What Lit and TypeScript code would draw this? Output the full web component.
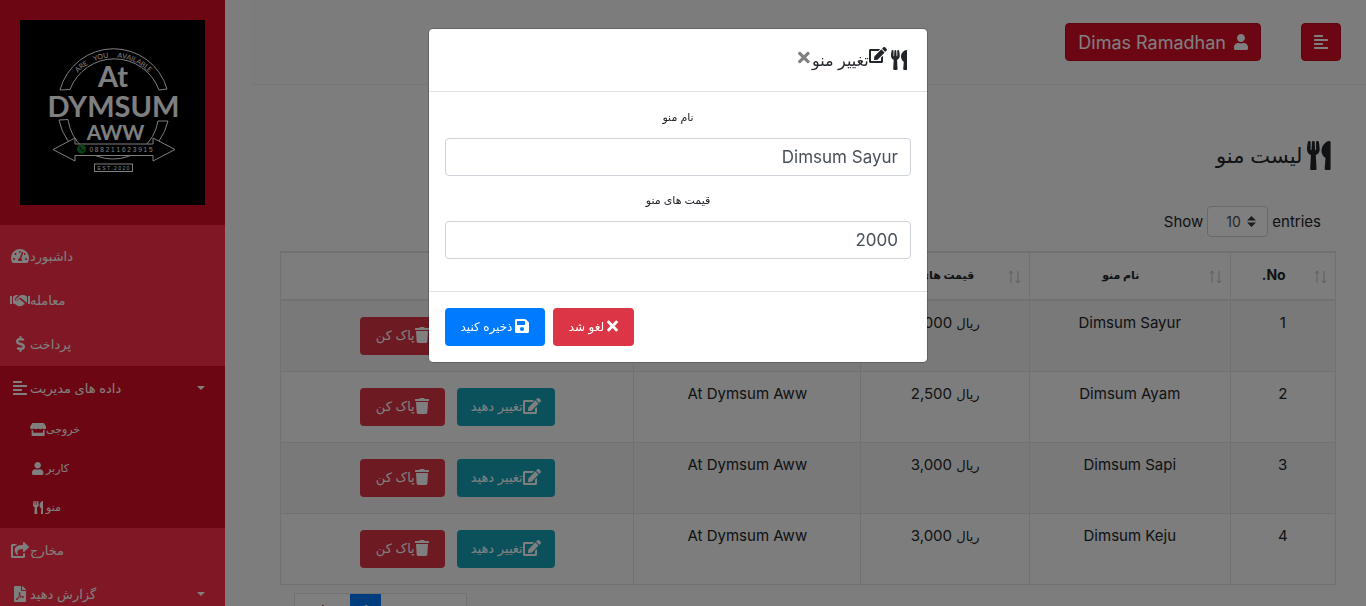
import { LitElement, html, css, svg } from "lit";
import { customElement } from "lit/decorators.js";

type Glyph = { w: number; h?: number; d: string };

const GLYPHS: Record<string, Glyph> = {
  gauge: { w: 576, d: "M288 32C128.940 32 0 160.940 0 320c0 52.800 14.250 102.260 39.060 144.800 5.610 9.620 16.300 15.200 27.440 15.200h443c11.140 0 21.830-5.580 27.440-15.200C561.750 422.260 576 372.800 576 320c0-159.060-128.940-288-288-288zm0 64c14.710 0 26.580 10.130 30.320 23.650-1.110 2.260-2.640 4.230-3.450 6.670l-9.220 27.670c-5.130 3.490-10.970 6.010-17.640 6.010-17.670 0-32-14.330-32-32S270.330 96 288 96zM96 384c-17.670 0-32-14.330-32-32s14.330-32 32-32 32 14.330 32 32-14.330 32-32 32zm48-160c-17.670 0-32-14.330-32-32s14.330-32 32-32 32 14.330 32 32-14.330 32-32 32zm246.770-72.410l-61.330 184C343.130 347.330 352 364.540 352 384c0 11.720-3.380 22.550-8.880 32H232.880c-5.500-9.450-8.880-20.280-8.880-32 0-33.940 26.500-61.430 59.900-63.590l61.340-184.010c4.170-12.560 17.730-19.450 30.360-15.170 12.570 4.190 19.350 17.790 15.170 30.360zm14.660 57.200l15.520-46.550c3.470-1.290 7.130-2.230 11.050-2.230 17.670 0 32 14.330 32 32s-14.330 32-32 32c-11.380-.010-20.890-6.280-26.570-15.220zM480 384c-17.670 0-32-14.330-32-32s14.330-32 32-32 32 14.330 32 32-14.330 32-32 32z" },
  handshake: { w: 640, d: "M0 128h64v256H0zM576 128h64v256h-64zM96 150l80-54h90l-98 96c-22 24-19 61 6 82 25 20 60 16 81-7l47-45 154 126c14 11 14 29 3 43-9 11-22 14-34 8 1 25-23 41-47 33-13 27-44 34-68 18-21 10-40 7-56-5L142 372H96zM544 150l-80-54H344L190 222c-12 11-12 28-1 39 11 12 29 12 41 1l86-79 34 6 160 130c8 7 14 16 18 26h16z" },
  dollar: { w: 288, d: "M209.200 233.400l-108-31.600C88.700 198.200 80 186.500 80 173.500c0-16.300 13.200-29.500 29.500-29.500h66.300c12.200 0 24.200 3.700 34.200 10.500 6.100 4.100 14.300 3.100 19.500-2l34.800-34c7.100-6.900 6.100-18.400-1.800-24.500C238 74.800 207.400 64.100 176 64V16c0-8.800-7.200-16-16-16h-32c-8.800 0-16 7.200-16 16v48h-2.500C45.800 64-5.400 118.700.500 183.600c4.200 46.100 39.400 83.600 83.800 96.600l102.500 30c12.500 3.700 21.200 15.300 21.200 28.300 0 16.300-13.200 29.500-29.500 29.500h-66.300C100 368 88 364.300 78 357.500c-6.100-4.100-14.300-3.100-19.500 2l-34.800 34c-7.100 6.900-6.100 18.400 1.800 24.500 24.500 19.200 55.100 29.900 86.500 30v48c0 8.800 7.200 16 16 16h32c8.800 0 16-7.200 16-16v-48.200c46.600-.900 90.300-28.600 105.700-72.700 21.500-61.600-14.600-124.800-72.500-141.700z" },
  align: { w: 448, d: "M12.830 352h262.340A12.820 12.820 0 0 0 288 339.170v-38.340A12.820 12.820 0 0 0 275.170 288H12.830A12.820 12.820 0 0 0 0 300.830v38.340A12.820 12.820 0 0 0 12.830 352zm0-256h262.340A12.820 12.820 0 0 0 288 83.170V44.830A12.820 12.820 0 0 0 275.170 32H12.830A12.820 12.820 0 0 0 0 44.830v38.340A12.820 12.820 0 0 0 12.830 96zM432 160H16a16 16 0 0 0-16 16v32a16 16 0 0 0 16 16h416a16 16 0 0 0 16-16v-32a16 16 0 0 0-16-16zm0 256H16a16 16 0 0 0-16 16v32a16 16 0 0 0 16 16h416a16 16 0 0 0 16-16v-32a16 16 0 0 0-16-16z" },
  store: { w: 640, d: "M96 0h448l82 130c28 48 2 112-52 119-40 5-71-12-85-31-40 43-125 43-169 0-43 43-129 43-169 0-16 20-48 37-88 30C12 240-12 178 14 130zM64 280c27 3 48-1 64-8v112h384V272c19 8 40 11 64 8v200c0 18-14 32-32 32H96c-18 0-32-14-32-32z" },
  user: { w: 448, d: "M224 256c70.700 0 128-57.300 128-128S294.700 0 224 0 96 57.300 96 128s57.300 128 128 128zm89.600 32h-16.700c-22.200 10.200-46.900 16-72.900 16s-50.600-5.800-72.900-16h-16.700C60.200 288 0 348.200 0 422.400V464c0 26.500 21.500 48 48 48h352c26.500 0 48-21.500 48-48v-41.600c0-74.200-60.200-134.400-134.400-134.400z" },
  utensils: { w: 416, d: "M207.900 15.200c.800 4.700 16.100 94.500 16.100 128.800 0 52.300-27.800 89.600-68.900 104.600L168 486.700c.700 13.700-10.200 25.300-24 25.300H80c-13.700 0-24.700-11.500-24-25.300l12.900-238.100C27.700 233.600 0 196.200 0 144 0 109.600 15.300 19.900 16.100 15.200 19.300-5.100 61.400-5.400 64 16.300v141.200c1.300 3.400 15.100 3.200 16 0 1.400-25.300 7.900-139.200 8-141.800 3.300-20.800 44.700-20.800 47.900 0 .200 2.700 6.600 116.500 8 141.800.900 3.200 14.800 3.400 16 0V16.300c2.600-21.600 44.800-21.400 48-1.100zm119.200 285.700l-15 185.100c-1.200 14 9.900 26 23.900 26h56c13.300 0 24-10.700 24-24V24c0-13.200-10.700-24-24-24-82.500 0-221.400 178.500-64.900 300.900z" },
  share: { w: 576, d: "M568.482 177.448L424.479 313.433C409.300 327.768 384 317.140 384 295.985v-71.963c-144.575.970-205.566 35.113-164.775 171.353 4.483 14.973-12.846 26.567-25.006 17.330C155.252 383.105 120 326.488 120 269.339c0-143.937 117.599-172.500 264-173.312V24.012c0-21.174 25.317-31.768 40.479-17.448l144.003 135.988c10.020 9.463 10.028 25.425 0 34.896zM384 379.128V448H64V128h50.916a11.990 11.990 0 0 0 8.648-3.693c14.953-15.568 32.237-27.890 51.014-37.676C185.708 80.830 181.584 64 169.033 64H48C21.490 64 0 85.490 0 112v352c0 26.510 21.490 48 48 48h352c26.510 0 48-21.490 48-48v-88.806c0-8.288-8.197-14.066-16.011-11.302a71.830 71.830 0 0 1-34.189 3.377c-7.270-1.046-13.800 4.514-13.800 11.859z" },
  pdf: { w: 384, d: "M181.900 256.100c-5-16-4.900-46.900-2-46.900 8.400 0 7.600 36.900 2 46.900zm-1.700 47.200c-7.700 20.200-17.300 43.300-28.400 62.700 18.300-7 39-17.200 62.900-21.900-12.700-9.600-24.900-23.400-34.500-40.800zM86.100 428.100c0 .800 13.200-5.400 34.900-40.200-6.700 6.300-29.100 24.500-34.900 40.200zM248 160h136v328c0 13.300-10.700 24-24 24H24c-13.300 0-24-10.700-24-24V24C0 10.700 10.700 0 24 0h200v136c0 13.200 10.800 24 24 24zm-8 171.800c-20-12.200-33.300-29-42.700-53.800 4.500-18.500 11.600-46.600 6.200-64.200-4.700-29.400-42.400-26.500-47.800-6.800-5 18.300-.400 44.100 8.100 77-11.600 27.600-28.700 64.600-40.800 85.800-.100 0-.100.100-.200.100-27.100 13.900-73.600 44.500-54.500 68 5.600 6.900 16 10 21.500 10 17.900 0 35.700-18 61.100-61.800 25.800-8.500 54.100-19.100 79-23.200 21.700 11.800 47.100 19.500 64 19.500 29.200 0 31.200-32 19.700-43.400-13.900-13.600-54.300-9.700-73.600-7.200zM377 105L279 7c-4.500-4.500-10.600-7-17-7h-6v128h128v-6.100c0-6.300-2.500-12.400-7-16.900zm-74.100 255.300c4.100-2.700-2.500-11.900-42.800-9 37.100 15.800 42.800 9 42.800 9z" },
  edit: { w: 576, d: "M402.600 83.200l90.200 90.200c3.800 3.800 3.800 10 0 13.800L274.400 405.600l-92.800 10.300c-12.400 1.400-22.900-9.100-21.500-21.500l10.300-92.800L388.800 83.200c3.800-3.800 10-3.800 13.800 0zm162-22.900l-48.800-48.800c-15.200-15.200-39.900-15.200-55.200 0l-35.400 35.400c-3.800 3.800-3.800 10 0 13.800l90.200 90.200c3.800 3.800 10 3.800 13.800 0l35.400-35.400c15.200-15.300 15.200-40 0-55.200zM384 346.200V448H64V128h229.800c3.200 0 6.200-1.300 8.500-3.500l40-40c7.600-7.600 2.200-20.500-8.500-20.500H48C21.500 64 0 85.500 0 112v352c0 26.500 21.500 48 48 48h352c26.500 0 48-21.500 48-48V306.200c0-10.700-12.900-16-20.500-8.500l-40 40c-2.200 2.300-3.500 5.300-3.500 8.500z" },
  trash: { w: 448, d: "M432 32H312l-9.400-18.700A24 24 0 0 0 281.100 0H166.800a23.720 23.720 0 0 0-21.400 13.300L136 32H16A16 16 0 0 0 0 48v32a16 16 0 0 0 16 16h416a16 16 0 0 0 16-16V48a16 16 0 0 0-16-16zM53.200 467a48 48 0 0 0 47.900 45h245.800a48 48 0 0 0 47.900-45L416 128H32z" },
  save: { w: 448, d: "M433.941 129.941l-83.882-83.882A48 48 0 0 0 316.118 32H48C21.490 32 0 53.490 0 80v352c0 26.510 21.490 48 48 48h352c26.510 0 48-21.490 48-48V163.882a48 48 0 0 0-14.059-33.941zM224 416c-35.346 0-64-28.654-64-64 0-35.346 28.654-64 64-64s64 28.654 64 64c0 35.346-28.654 64-64 64zm96-304.520V212c0 6.627-5.373 12-12 12H76c-6.627 0-12-5.373-12-12V108c0-6.627 5.373-12 12-12h228.520c3.183 0 6.235 1.264 8.485 3.515l3.480 3.480A11.996 11.996 0 0 1 320 111.480z" },
  times: { w: 352, d: "M242.720 256l100.070-100.070c12.280-12.280 12.280-32.190 0-44.480l-22.240-22.240c-12.280-12.280-32.190-12.280-44.480 0L176 189.280 75.930 89.210c-12.280-12.280-32.190-12.280-44.480 0L9.210 111.450c-12.280 12.280-12.280 32.190 0 44.480L109.280 256 9.210 356.070c-12.280 12.280-12.280 32.190 0 44.480l22.240 22.240c12.280 12.280 32.200 12.280 44.480 0L176 322.720l100.070 100.070c12.280 12.280 32.200 12.280 44.480 0l22.240-22.240c12.280-12.280 12.280-32.190 0-44.480L242.720 256z" },
};

const icon = (name: string) => {
  const g = GLYPHS[name];
  return html`<svg class="icon" viewBox="0 0 ${g.w} 512" style="width:${g.w / 512}em" aria-hidden="true"><path fill="currentColor" fill-rule="evenodd" d=${g.d}></path></svg>`;
};

const base = css`
  * { box-sizing: border-box; }
  button, input, select { font-family: inherit; margin: 0; }
  a { color: inherit; text-decoration: none; }
  .icon { height: 1em; flex: none; display: block; }
`;

@customElement("brand-logo")
class BrandLogo extends LitElement {
  static styles = css`
    :host { display: block; background: #000; aspect-ratio: 1; }
    svg { display: block; width: 100%; }
    text { font-family: Lato, sans-serif; fill: #fff; text-anchor: middle; }
    .line { fill: none; stroke: #fff; stroke-width: 1; }
    .solid { fill: #000; stroke: #fff; stroke-width: 1; }
    .big { font-weight: 700; }
    .arc { white-space: pre; }
    .phone { font-family: "Liberation Sans", sans-serif; }
  `;
  render() {
    return html`<svg viewBox="0 0 185 185" role="img" aria-label="At Dymsum Aww">
      ${svg`
        <defs><path id="arc" d="M46 73A49.500 49.500 0 0 1 141 73"></path></defs>
        <path class="line" d="M40 70A55.500 55.500 0 0 1 147 69L139 70A47.500 47.500 0 0 0 50 69.500Z"></path>
        <path class="line" d="M48 121A56 56 0 0 1 39 100L48 99.500A45.500 45.500 0 0 0 138 101L148 101A56 56 0 0 1 139 121"></path>
        <text class="arc" font-size="7"><textPath href="#arc" startOffset="50%">ARE    YOU     AVAILABLE</textPath></text>
        <text class="big" x="93" y="67" font-size="29">At</text>
        <text class="big" x="93.500" y="97" font-size="29">DYMSUM</text>
        <text class="big" x="95.500" y="120" font-size="21">AWW</text>
        <path class="solid" d="M33 129.500L55 118V124H133V118L155 129.500L133 141V135.500H55V141Z"></path>
        <circle cx="61.500" cy="129" r="4.500" fill="#12852f"></circle>
        <path d="M60 127q0 3 4 4" fill="none" stroke="#000"></path>
        <text class="phone" x="101" y="131.500" font-size="6.500">0 8 8 2 1 1 6 2 3 9 1 5</text>
        <rect class="solid" x="74.500" y="144" width="38" height="7.500"></rect>
        <text class="phone" x="93.500" y="150" font-size="5">E S T .  2 0 2 0</text>`}
    </svg>`;
  }
}

@customElement("side-bar")
class SideBar extends LitElement {
  static styles = [base, css`
    :host { display: flex; flex-direction: column; background: #ff3149; color: #fff; direction: ltr; }
    .head { padding: 20px; background: #db0d26; }
    ul { list-style: none; margin: 0; padding: 0; }
    .menu { padding-top: 9px; }
    .link { display: flex; align-items: center; height: 44px; padding: 0 10px 1px; font-size: 13px; }
    .link .icon { font-size: 16px; }
    .slot { width: 20px; display: flex; justify-content: center; }
    .caret { margin-left: auto; margin-right: 10px; border: 4px solid transparent; border-top-color: #fff; border-bottom: 0; }
    .open { background: #db0d26; }
    .sub .link { height: 39px; padding-left: 30px; font-size: 11px; }
    .sub { padding-bottom: 1px; }
    .sub .slot { width: 16px; }
    .sub .icon { font-size: 13px; }
  `];
  item(name: string, label: string, caret = false) {
    return html`<a class="link" href="#"><span class="slot">${icon(name)}</span><span dir="rtl">${label}</span>${caret ? html`<span class="caret"></span>` : ""}</a>`;
  }
  render() {
    return html`
      <div class="head"><brand-logo></brand-logo></div>
      <nav><ul class="menu">
        <li>${this.item("gauge", "داشبورد")}</li>
        <li>${this.item("handshake", "معامله")}</li>
        <li>${this.item("dollar", "پرداخت")}</li>
        <li class="open">${this.item("align", "داده های مدیریت", true)}
          <ul class="sub">
            <li>${this.item("store", "خروجی")}</li>
            <li>${this.item("user", "کاربر")}</li>
            <li>${this.item("utensils", "منو")}</li>
          </ul>
        </li>
        <li>${this.item("share", "مخارج")}</li>
        <li>${this.item("pdf", "گزارش دهید", true)}</li>
      </ul></nav>`;
  }
}

@customElement("menu-table")
class MenuTable extends LitElement {
  static styles = [base, css`
    :host { display: block; }
    table { width: 100%; table-layout: fixed; border-collapse: collapse; font-size: 15px; line-height: 24px; color: #212529; text-align: center; }
    .c-no { width: 10%; } .c-name { width: 19%; } .c-price { width: 16%; } .c-out { width: 21.5%; }
    th, td { border: 1px solid #dee2e6; padding: 10px 12px 12px; vertical-align: top; }
    th { font-size: 11px; border-width: 2px 1px; padding: 10px 12px 12px 30px; padding-inline: 30px 12px; position: relative; white-space: nowrap; }
    th.no { font-size: 14px; }
    bdi { font-size: 13px; }
    .sort { position: absolute; right: 8px; top: 12px; color: #bcbec0; display: flex; }
    .sort svg { width: 14px; height: 22px; }
    tbody tr:nth-child(odd) { background: #f2f2f2; }
    .actions { display: flex; justify-content: center; gap: 12px; padding: 6px 0 4px; }
    .btn { height: 38px; border: 0; border-radius: 4px; color: #fff; font-size: 13px; display: flex; align-items: center; justify-content: center; padding: 0 0 2px; white-space: nowrap; }
    .btn .icon { font-size: 16px; }
    .edit { background: #17a2b8; width: 98px; }
    .del { background: #dc3545; width: 85px; }
  `];
  rows = [["Dimsum Sayur", "2,000"], ["Dimsum Ayam", "2,500"], ["Dimsum Sapi", "3,000"], ["Dimsum Keju", "3,000"]];
  render() {
    const sort = html`<span class="sort"><svg viewBox="0 0 14 22" fill="none" stroke="currentColor" aria-hidden="true"><path d="M4 18V6M2 8.500L4 6L6 8.500M11 6V18M9 15.500L11 18L13 15.500"></path></svg></span>`;
    return html`<table>
      <colgroup><col class="c-no"><col class="c-name"><col class="c-price"><col class="c-out"><col></colgroup>
      <thead><tr>
        <th class="no">No.${sort}</th><th>نام منو${sort}</th><th>قیمت های منو${sort}</th><th>خروجی${sort}</th><th></th>
      </tr></thead>
      <tbody>${this.rows.map((r, i) => html`<tr>
        <td>${i + 1}</td><td>${r[0]}</td><td><bdi>ریال</bdi> ${r[1]}</td><td>At Dymsum Aww</td>
        <td><div class="actions">
          <button class="btn edit">${icon("edit")}تغییر دهید</button>
          <button class="btn del">${icon("trash")}پاک کن</button>
        </div></td></tr>`)}</tbody>
    </table>`;
  }
}

@customElement("edit-dialog")
class EditDialog extends LitElement {
  static styles = [base, css`
    :host { position: fixed; inset: 0; z-index: 10; background: rgba(0, 0, 0, 0.5); display: block; padding-right: 10px; box-sizing: border-box; }
    .dialog { width: min(500px, 100% - 20px); margin: 28px auto; background: #fff; border: 1px solid rgba(0, 0, 0, 0.2); border-radius: 5px; background-clip: padding-box; color: #212529; }
    header { display: flex; align-items: center; height: 63px; padding: 0 20px; border-bottom: 1px solid #dee2e6; }
    h5 { margin: 0; display: flex; align-items: center; font-size: 16px; font-weight: 400; }
    h5 .icon { font-size: 20px; }
    .pencil { padding-bottom: 10px; margin-inline-start: 4px; }
    .pencil .icon { font-size: 16px; }
    .close { border: 0; background: none; padding: 0 0 5px; margin-inline-start: 2px; color: #7f7f7f; font-size: 17px; }
    .body { padding: 16px 16px 32px; display: grid; gap: 15px; }
    .field { display: grid; gap: 12px; }
    label { text-align: center; font-size: 11px; line-height: 18px; }
    input { width: 100%; height: 38px; border: 1px solid #ced4da; border-radius: 4px; padding: 0 12px; font-size: 17px; color: #495057; background: #fff; }
    footer { display: flex; justify-content: flex-end; gap: 8px; padding: 16px; border-top: 1px solid #dee2e6; }
    .btn { height: 38px; border: 0; border-radius: 4px; color: #fff; font-size: 12px; display: flex; align-items: center; justify-content: center; gap: 3px; padding: 0 0 2px; white-space: nowrap; }
    .btn .icon { font-size: 16px; }
    .cancel { background: #dc3545; width: 81px; }
    .save { background: #007bff; width: 100px; }
  `];
  render() {
    return html`<div class="dialog" role="dialog" aria-labelledby="title">
      <header><h5 id="title">${icon("utensils")}<span class="pencil">${icon("edit")}</span>تغییر منو</h5>
        <button class="close" aria-label="بستن">${icon("times")}</button></header>
      <div class="body">
        <div class="field"><label for="name">نام منو</label><input id="name" type="text" value="Dimsum Sayur"></div>
        <div class="field"><label for="price">قیمت های منو</label><input id="price" type="text" value="2000"></div>
      </div>
      <footer><button class="btn cancel">${icon("times")}لغو شد</button><button class="btn save">${icon("save")}ذخیره کنید</button></footer>
    </div>`;
  }
}

@customElement("app-root")
class AppRoot extends LitElement {
  static styles = [base, css`
    :host { display: block; height: 100vh; overflow: hidden; direction: rtl; background: #fafafa; color: #212529; font-family: Inter, "DejaVu Sans", sans-serif; }
    .page { display: grid; grid-template-columns: 225px minmax(0, 1fr); direction: ltr; }
    main { direction: rtl; padding: 0 30px 0 55px; }
    .bar { display: flex; gap: 40px; align-items: center; height: 85px; margin: 0 -30px 0 -28px; padding: 0 25px; background: #f8f9fa; border-bottom: 1px solid #ececec; }
    .btn { height: 38px; border: 1px solid #c00a20; border-radius: 4px; background: #db0d26; color: #fff; font-size: 18px; padding: 0 12px; display: flex; align-items: center; gap: 8px; }
    .btn .icon { font-size: 16px; }
    h2 { display: flex; align-items: center; gap: 5px; margin: 50px 5px 0; height: 40px; font-size: 21px; font-weight: 400; }
    h2 .icon { font-size: 29px; }
    .length { direction: ltr; display: flex; justify-content: flex-end; align-items: center; gap: 4px; margin: 31px 15px 14px; font-size: 15px; }
    .pick { position: relative; display: flex; color: #495057; }
    select { appearance: none; width: 61px; height: 31px; border: 1px solid #ced4da; border-radius: 4px; background: #fff; color: inherit; padding: 0 18px; font-size: 14px; }
    .arrows { position: absolute; right: 12px; top: 10px; width: 9px; height: 11px; pointer-events: none; }
    .foot { direction: ltr; padding: 8px 14px 0; }
    .pages { display: flex; width: 173px; height: 34px; border: 1px solid #dee2e6; background: #fff; font-size: 14px; }
    .pages a { display: flex; align-items: center; justify-content: center; flex: 1 1 0; }
    .pages .current { flex: 0 0 31px; background: #007bff; color: #fff; }
    .pages .prev { flex: 0 0 55px; }
  `];
  render() {
    return html`<div class="page">
      <side-bar></side-bar>
      <main>
        <div class="bar">
          <button class="btn" aria-label="منو">${icon("align")}</button>
          <button class="btn">${icon("user")}<span>Dimas Ramadhan</span></button>
        </div>
        <h2>${icon("utensils")}<span>لیست منو</span></h2>
        <div class="length"><label for="len">Show</label>
          <span class="pick"><select id="len"><option>10</option></select><svg class="arrows" viewBox="0 0 9 11" fill="#343a40" aria-hidden="true"><path d="M4.500 0L9 4.500H0ZM0 6.500H9L4.500 11Z"></path></svg></span>
          <span>entries</span></div>
        <menu-table></menu-table>
        <div class="foot"><nav class="pages"><a class="prev" href="#">قبلی</a><a class="current" href="#">1</a><a href="#">بعدی</a></nav></div>
      </main>
    </div>
    <edit-dialog></edit-dialog>`;
  }
}
